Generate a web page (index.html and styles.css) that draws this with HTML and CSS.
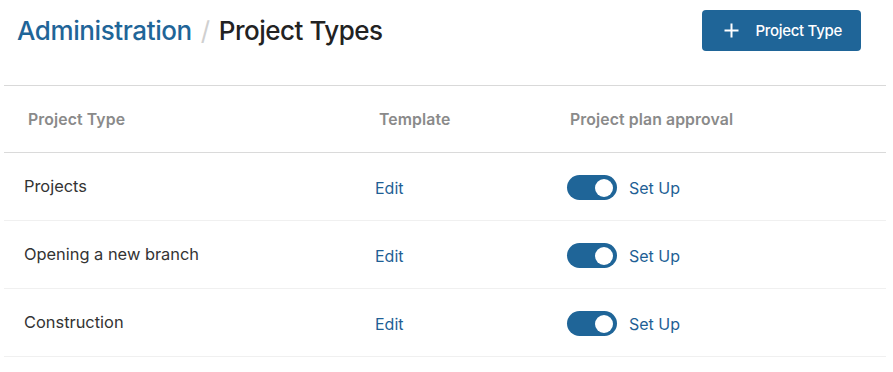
FILE: index.html
```html
<!DOCTYPE html>
<html lang="en">

<head>
    <meta charset="UTF-8">
    <meta name="viewport" content="width=device-width, initial-scale=1.0">
    <title>Project Types</title>
    <link rel="stylesheet" href="styles.css">
</head>

<body>
    <div class="page-header">
        <h1 class="breadcrumbs">
            <a href="#" class="crumb-link">Administration</a>
            <span class="crumb-sep">/</span>
            <span class="crumb-current">Project Types</span>
        </h1>
        <button class="add-button">
            <svg class="add-icon" width="15" height="15" viewBox="0 0 15 15">
                <path d="M7.5 0.5v14M0.5 7.5h14" stroke="#fff" stroke-width="2" fill="none" />
            </svg>
            <span>Project Type</span>
        </button>
    </div>

    <div class="types-table">
        <div class="table-row table-head">
            <div class="cell">Project Type</div>
            <div class="cell">Template</div>
            <div class="cell">Project plan approval</div>
        </div>

        <div class="table-row">
            <div class="cell name">Projects</div>
            <div class="cell"><a href="#" class="edit-link">Edit</a></div>
            <div class="cell approval">
                <span class="toggle on"><span class="knob"></span></span>
                <a href="#" class="setup-link">Set Up</a>
            </div>
        </div>

        <div class="table-row">
            <div class="cell name">Opening a new branch</div>
            <div class="cell"><a href="#" class="edit-link">Edit</a></div>
            <div class="cell approval">
                <span class="toggle on"><span class="knob"></span></span>
                <a href="#" class="setup-link">Set Up</a>
            </div>
        </div>

        <div class="table-row">
            <div class="cell name">Construction</div>
            <div class="cell"><a href="#" class="edit-link">Edit</a></div>
            <div class="cell approval">
                <span class="toggle on"><span class="knob"></span></span>
                <a href="#" class="setup-link">Set Up</a>
            </div>
        </div>
    </div>
</body>

</html>
```

FILE: styles.css
```css
* {
    margin: 0;
    padding: 0;
    box-sizing: border-box;
}

body {
    font-family: Inter, "Noto Sans", sans-serif;
    color: #333;
    background: #fff;
    padding: 0 7px 0 4px;
}

a {
    text-decoration: none;
}

.page-header {
    display: flex;
    justify-content: space-between;
    align-items: flex-start;
    height: 86px;
    padding: 10px 25px 0 13px;
    border-bottom: 1px solid #d9d9d9;
}

.breadcrumbs {
    display: flex;
    align-items: baseline;
    gap: 9px;
    font-size: 26px;
    font-weight: 500;
    line-height: 42px;
    letter-spacing: -0.4px;
}

.crumb-link {
    color: #1f6598;
}

.crumb-sep {
    color: #d0d0d0;
    font-weight: 400;
}

.crumb-current {
    color: #222;
    letter-spacing: -0.5px;
}

.add-button {
    display: flex;
    align-items: center;
    gap: 16px;
    height: 41px;
    padding: 0 19px 0 22px;
    background-color: #1f6598;
    color: #fff;
    border: none;
    border-radius: 4px;
    font-family: inherit;
    font-size: 15px;
    font-weight: 500;
    letter-spacing: -0.3px;
    cursor: pointer;
}

.table-row {
    display: grid;
    grid-template-columns: 351px 192px 1fr;
    align-items: center;
    height: 68px;
    padding-top: 2px;
    border-bottom: 1px solid #f0f0f0;
}

.table-head {
    height: 67px;
    padding-top: 0;
    border-bottom-color: #dadada;
    color: #8a8a8a;
    font-weight: 600;
}

.cell {
    padding-left: 20px;
    font-size: 16px;
}

.table-head .cell {
    padding-left: 24px;
    font-size: 15.8px;
    letter-spacing: 0.1px;
}

.table-head .cell:last-child {
    padding-left: 23px;
}

.name {
    margin-top: -3px;
    color: #333;
    font-size: 16.4px;
}

.edit-link,
.setup-link {
    color: #1f5f95;
    font-size: 16px;
}

.approval {
    display: flex;
    align-items: center;
    gap: 12px;
}

.toggle {
    display: flex;
    align-items: center;
    justify-content: flex-end;
    width: 50px;
    height: 25px;
    padding: 0 4px;
    border-radius: 13px;
    background-color: #1f6598;
}

.knob {
    width: 18px;
    height: 18px;
    border-radius: 50%;
    background: #fff;
}
```
